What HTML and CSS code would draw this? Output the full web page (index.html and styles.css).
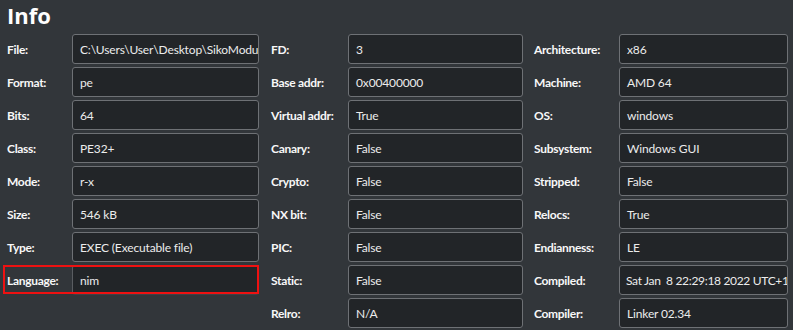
FILE: index.html
```html
<!DOCTYPE html>
<html>
<head>
<meta charset="utf-8">
<link rel="stylesheet" href="styles.css">
</head>
<body>
<h1 class="title">Info</h1>
<div class="grid">
  <div class="lbl">File:</div><div class="val">C:\Users\User\Desktop\SikoModule</div>
  <div class="lbl c2">FD:</div><div class="val">3</div>
  <div class="lbl c3">Architecture:</div><div class="val">x86</div>

  <div class="lbl">Format:</div><div class="val">pe</div>
  <div class="lbl c2">Base addr:</div><div class="val">0x00400000</div>
  <div class="lbl c3">Machine:</div><div class="val">AMD 64</div>

  <div class="lbl">Bits:</div><div class="val">64</div>
  <div class="lbl c2">Virtual addr:</div><div class="val">True</div>
  <div class="lbl c3">OS:</div><div class="val">windows</div>

  <div class="lbl">Class:</div><div class="val">PE32+</div>
  <div class="lbl c2">Canary:</div><div class="val">False</div>
  <div class="lbl c3">Subsystem:</div><div class="val">Windows GUI</div>

  <div class="lbl">Mode:</div><div class="val">r-x</div>
  <div class="lbl c2">Crypto:</div><div class="val">False</div>
  <div class="lbl c3">Stripped:</div><div class="val">False</div>

  <div class="lbl">Size:</div><div class="val">546 kB</div>
  <div class="lbl c2">NX bit:</div><div class="val">False</div>
  <div class="lbl c3">Relocs:</div><div class="val">True</div>

  <div class="lbl">Type:</div><div class="val">EXEC (Executable file)</div>
  <div class="lbl c2">PIC:</div><div class="val">False</div>
  <div class="lbl c3">Endianness:</div><div class="val">LE</div>

  <div class="hl">
    <div class="lbl">Language:</div><div class="val">nim</div>
  </div>
  <div class="lbl c2">Static:</div><div class="val">False</div>
  <div class="lbl c3">Compiled:</div><div class="val tight">Sat Jan &nbsp;8 22:29:18 2022 UTC+1</div>

  <div class="spacer"></div>
  <div class="lbl c2">Relro:</div><div class="val">N/A</div>
  <div class="lbl c3">Compiler:</div><div class="val">Linker 02.34</div>
</div>
</body>
</html>
```
FILE: styles.css
```css
html, body {
  margin: 0;
  padding: 0;
  background: #32363a;
  overflow: hidden;
}
body {
  padding-left: 7px;
  font-family: "Lato", "Open Sans", sans-serif;
  color: #f4f4f4;
}
.title {
  margin: 0;
  height: 34px;
  font-family: "Open Sans", sans-serif;
  font-size: 22px;
  line-height: 30px;
  font-weight: 700;
  color: #ffffff;
}
.grid {
  display: grid;
  grid-template-columns: 65px 187px 89px 175px 96px 169px;
  grid-auto-rows: 30px;
  row-gap: 3px;
}
.lbl {
  display: flex;
  align-items: center;
  font-size: 12px;
  letter-spacing: -0.3px;
  font-weight: 700;
  color: #f8f8f8;
  white-space: nowrap;
}
.c2 { padding-left: 12px; }
.c3 { padding-left: 11px; }
.val {
  box-sizing: border-box;
  display: flex;
  align-items: center;
  padding: 0 4px 0 7px;
  background: #222528;
  border: 1px solid #6e7175;
  border-radius: 3px;
  font-size: 12px;
  letter-spacing: -0.15px;
  color: #ececec;
  white-space: pre;
  overflow: hidden;
}
.tight {
  letter-spacing: -0.32px;
  padding-left: 6px;
  padding-right: 1px;
}
.hl {
  grid-column: 1 / 3;
  display: grid;
  grid-template-columns: 65px 187px;
  position: relative;
}
.hl .val {
  border-color: #3e4146;
  border-left-color: #5a5d61;
}
.hl::after {
  content: "";
  position: absolute;
  left: -4px;
  top: 0;
  right: 0;
  bottom: 1px;
  border: 2px solid #ee1111;
  pointer-events: none;
}
.spacer { grid-column: 1 / 3; }
```
